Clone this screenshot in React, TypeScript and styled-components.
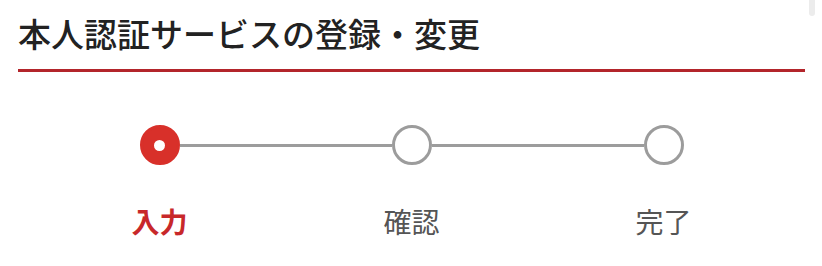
import React from "react";
import styled, { createGlobalStyle } from "styled-components";

const GlobalStyle = createGlobalStyle`
  html, body {
    margin: 0;
    padding: 0;
    background: #ffffff;
  }
  body {
    font-family: "Noto Sans CJK JP", "Noto Sans", sans-serif;
  }
`;

const Page = styled.div`
  position: relative;
  width: 822px;
  height: 266px;
  overflow: hidden;
  background: #fff;
  padding: 0 17px 0 18px;
  box-sizing: border-box;
`;

const ScrollThumb = styled.div`
  position: absolute;
  top: 0;
  right: 7px;
  width: 6px;
  height: 16px;
  border-radius: 0 0 3px 3px;
  background: #ececec;
`;

const Header = styled.div`
  padding-top: 17px;
  padding-bottom: 19px;
  border-bottom: 3px solid #b3252b;
`;

const Title = styled.h1`
  margin: 0;
  font-size: 33px;
  line-height: 33px;
  font-weight: 500;
  color: #222;
  letter-spacing: 0;
  white-space: nowrap;
`;

const Track = styled.div`
  display: flex;
  align-items: center;
  width: 544px;
  margin: 53px auto 0;
`;

const Dot = styled.div<{ $active?: boolean }>`
  flex: none;
  width: 40px;
  height: 40px;
  border-radius: 50%;
  box-sizing: border-box;
  display: flex;
  align-items: center;
  justify-content: center;
  background: ${(p) => (p.$active ? "#d8302a" : "#fff")};
  border: 3px solid ${(p) => (p.$active ? "#d8302a" : "#9c9c9c")};
  &::after {
    content: "";
    display: ${(p) => (p.$active ? "block" : "none")};
    width: 11px;
    height: 11px;
    border-radius: 50%;
    background: #fff;
  }
`;

const Connector = styled.div`
  flex: 1;
  height: 3px;
  background: #9c9c9c;
`;

const Labels = styled.div`
  display: grid;
  grid-template-columns: repeat(3, 252px);
  justify-content: center;
  margin-top: 42px;
`;

const Label = styled.div<{ $active?: boolean }>`
  text-align: center;
  font-size: 28px;
  line-height: 28px;
  font-weight: ${(p) => (p.$active ? 700 : 400)};
  color: ${(p) => (p.$active ? "#c8282a" : "#555")};
`;

const steps = [
  { label: "入力", active: true },
  { label: "確認", active: false },
  { label: "完了", active: false },
];

export default function App() {
  return (
    <>
      <GlobalStyle />
      <Page>
        <ScrollThumb />
        <Header>
          <Title>本人認証サービスの登録・変更</Title>
        </Header>
        <Track>
          {steps.map((s, i) => (
            <React.Fragment key={s.label}>
              {i > 0 && <Connector />}
              <Dot $active={s.active} />
            </React.Fragment>
          ))}
        </Track>
        <Labels>
          {steps.map((s) => (
            <Label key={s.label} $active={s.active}>
              {s.label}
            </Label>
          ))}
        </Labels>
      </Page>
    </>
  );
}
